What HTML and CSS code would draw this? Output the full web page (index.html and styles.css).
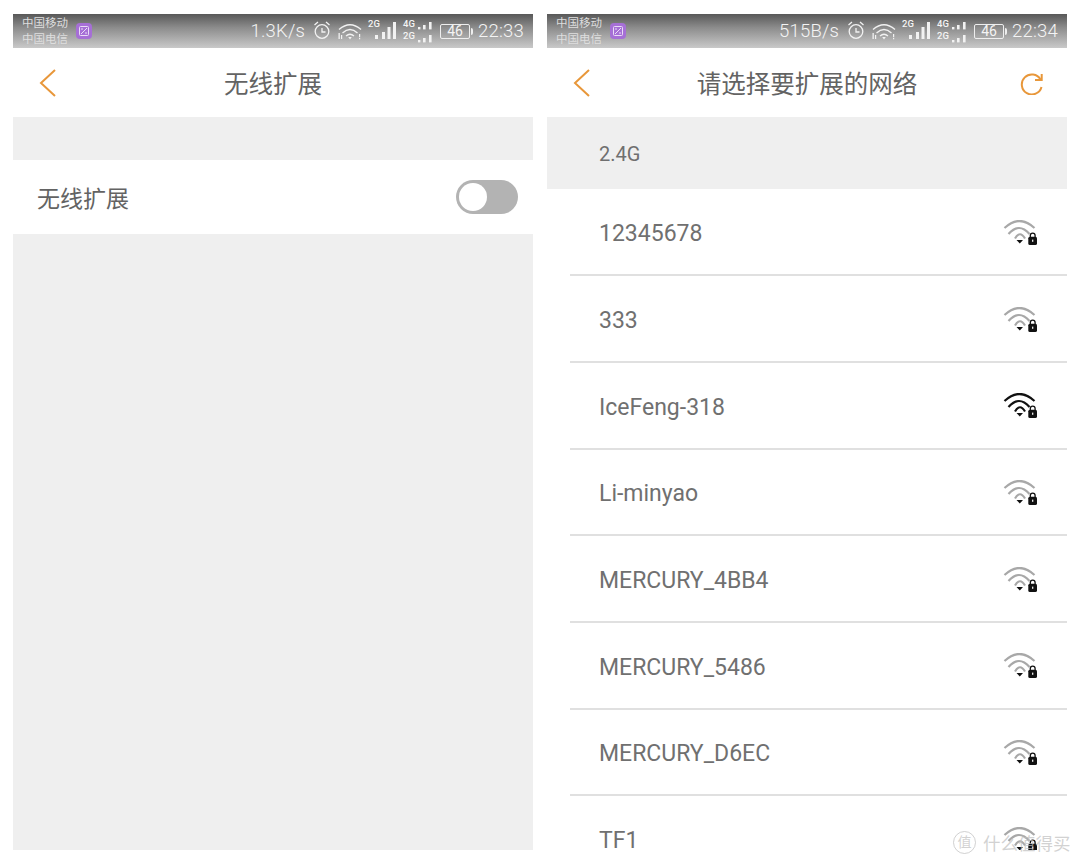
FILE: index.html
```html
<!DOCTYPE html>
<html>
  <head>
    <meta charset="utf-8">
    <link rel="stylesheet" href="styles.css">
  </head>
  <body>
    <svg class="defs">
      <defs>
        <symbol id="wifi-lock" viewBox="0 0 34 26">
          <path d="M1.5 8Q16.5-6 31.5 8M5.5 14Q16 2 26.5 14M12 18.5Q17 10 22 18.5" fill="none" stroke="currentColor" stroke-width="2.2"/>
          <path d="M13.5 20H20L16.8 23.5Z" fill="#111"/>
          <rect x="25.3" y="16.7" width="8.7" height="8.3" rx="1.6" fill="#111"/>
          <path d="M27.3 17V15.5a2.4 2.4 0 0 1 4.8 0V17" fill="none" stroke="#111" stroke-width="1.3"/>
          <rect x="29.1" y="19.6" width="1.2" height="2.2" fill="#fff"/>
        </symbol>
        <symbol id="status-icons" viewBox="0 0 120 24">
          <!-- alarm -->
          <g fill="none" stroke="#f2f2f2" stroke-width="1.3">
            <circle cx="9" cy="12.5" r="6.8"/>
            <path d="M9 9V13H12.5M1.5 6L5 3M16.5 6L13 3"/>
            <!-- wifi -->
            <path d="M26 10.5Q37 1 48 10.5M29.5 14Q37 7 44.5 14M33 17Q37 13.5 41 17"/>
          </g>
          <path d="M35.2 18H38.8L37 20.5ZM25.5 14V20H26.8V14ZM28 16V20H29.2V16ZM46 15V18.2H47.2V15ZM46 19H47.2V20.2H46Z" fill="#f2f2f2"/>
          <!-- signal 2G -->
          <g fill="#f2f2f2">
            <rect x="62" y="16" width="3" height="4"/>
            <rect x="69" y="13" width="3" height="7"/>
            <rect x="74.5" y="8" width="3" height="12"/>
            <rect x="80" y="3" width="3" height="17"/>
            <!-- signal 4G 2G -->
            <rect x="105" y="8" width="2.4" height="2.4"/>
            <rect x="110" y="6" width="2.6" height="4.4"/>
            <rect x="116" y="3" width="2.6" height="7.4"/>
            <rect x="105" y="21" width="2.4" height="2.4"/>
            <rect x="110" y="19" width="2.6" height="4.4"/>
            <rect x="116" y="16" width="2.6" height="7.4"/>
          </g>
        </symbol>
      </defs>
    </svg>

    <div class="page">
      <div class="screen">
        <div class="status">
          <div class="carrier"><span>中国移动</span><span>中国电信</span></div>
          <svg class="app-badge" viewBox="0 0 16 16"><rect width="16" height="16" rx="4" fill="#a66fd6"/><rect x="3.5" y="3.5" width="9" height="9" rx="1" fill="none" stroke="#e9dcf6"/><path d="M5 11L11 5M5 6h2M9 10h2" stroke="#e9dcf6"/></svg>
          <div class="status-right">
            <span class="speed">1.3K/s</span>
            <div class="status-icons">
              <svg class="icons-svg"><use href="#status-icons"/></svg>
              <span class="tag tag-2g">2G</span>
              <span class="tag tag-4g">4G</span>
              <span class="tag tag-2g2">2G</span>
            </div>
            <span class="battery">46</span>
            <span class="clock">22:33</span>
          </div>
        </div>
        <div class="nav">
          <svg class="back" viewBox="0 0 18 28"><path d="M16 1L2 14L16 27" fill="none" stroke="#e8973a" stroke-width="2"/></svg>
          <h1>无线扩展</h1>
        </div>
        <div class="gap"></div>
        <div class="switch-row">
          <span>无线扩展</span>
          <div class="toggle"><div class="knob"></div></div>
        </div>
      </div>

      <div class="screen">
        <div class="status">
          <div class="carrier"><span>中国移动</span><span>中国电信</span></div>
          <svg class="app-badge" viewBox="0 0 16 16"><rect width="16" height="16" rx="4" fill="#a66fd6"/><rect x="3.5" y="3.5" width="9" height="9" rx="1" fill="none" stroke="#e9dcf6"/><path d="M5 11L11 5M5 6h2M9 10h2" stroke="#e9dcf6"/></svg>
          <div class="status-right">
            <span class="speed">515B/s</span>
            <div class="status-icons">
              <svg class="icons-svg"><use href="#status-icons"/></svg>
              <span class="tag tag-2g">2G</span>
              <span class="tag tag-4g">4G</span>
              <span class="tag tag-2g2">2G</span>
            </div>
            <span class="battery">46</span>
            <span class="clock">22:34</span>
          </div>
        </div>
        <div class="nav">
          <svg class="back" viewBox="0 0 18 28"><path d="M16 1L2 14L16 27" fill="none" stroke="#e8973a" stroke-width="2"/></svg>
          <h1>请选择要扩展的网络</h1>
          <svg class="refresh" viewBox="0 0 24 24"><path d="M20.5 8.5A10 10 0 1 0 21.5 16" fill="none" stroke="#e8973a" stroke-width="2"/><path d="M21.7 3V9H15" fill="none" stroke="#e8973a" stroke-width="2"/></svg>
        </div>
        <div class="band">2.4G</div>
        <ul class="networks">
          <li>12345678<svg class="wifi"><use href="#wifi-lock"/></svg></li>
          <li>333<svg class="wifi"><use href="#wifi-lock"/></svg></li>
          <li>IceFeng-318<svg class="wifi strong"><use href="#wifi-lock"/></svg></li>
          <li>Li-minyao<svg class="wifi"><use href="#wifi-lock"/></svg></li>
          <li>MERCURY_4BB4<svg class="wifi"><use href="#wifi-lock"/></svg></li>
          <li>MERCURY_5486<svg class="wifi"><use href="#wifi-lock"/></svg></li>
          <li>MERCURY_D6EC<svg class="wifi"><use href="#wifi-lock"/></svg></li>
          <li>TF1<svg class="wifi"><use href="#wifi-lock"/></svg></li>
        </ul>
      </div>
    </div>

    <div class="watermark"><span class="mark-circle">值</span><span>什么值得买</span></div>
  </body>
</html>
```

FILE: styles.css
```css
* {
  box-sizing: border-box;
}
html, body {
  margin: 0;
  height: 864px;
  overflow: hidden;
  background: #fff;
}
body {
  position: relative;
  font-family: Roboto, "Noto Sans CJK SC", sans-serif;
  color: #666;
}
.defs {
  display: none;
}
.page {
  display: flex;
  gap: 14px;
  padding: 14px 13px;
  height: 864px;
}
.screen {
  width: 520px;
  height: 836px;
  overflow: hidden;
  background: #fff;
  display: flex;
  flex-direction: column;
}

/* status bar */
.status {
  height: 34px;
  flex: none;
  display: flex;
  align-items: center;
  padding: 0 9px;
  background: linear-gradient(#585858, #8c8c8c 40%, #c9c9c9);
  color: #eee;
}
.carrier {
  display: flex;
  flex-direction: column;
  font-size: 11.5px;
  line-height: 16px;
  color: #dedede;
}
.app-badge {
  width: 16px;
  height: 16px;
  margin-left: 8px;
  margin-top: -1px;
}
.status-right {
  margin-left: auto;
  display: flex;
  align-items: center;
}
.speed, .clock {
  font-size: 18.5px;
  font-weight: 300;
  letter-spacing: .2px;
  color: #f4f4f4;
}
.status-icons {
  position: relative;
  width: 120px;
  height: 24px;
  margin-left: 8px;
}
.icons-svg {
  width: 120px;
  height: 24px;
  display: block;
}
.tag {
  position: absolute;
  font-size: 9.5px;
  font-weight: 500;
  line-height: 9px;
  color: #f4f4f4;
}
.tag-2g {
  left: 55px;
  top: 0;
}
.tag-4g {
  left: 90px;
  top: 0;
}
.tag-2g2 {
  left: 90px;
  top: 12px;
}
.battery {
  position: relative;
  width: 30px;
  height: 15px;
  margin: 0 3px 0 7px;
  border: 1px solid #eee;
  border-radius: 2px;
  font-size: 14px;
  line-height: 13px;
  text-align: center;
  color: #f4f4f4;
}
.battery:after {
  content: '';
  position: absolute;
  right: -4px;
  top: 3px;
  width: 2px;
  height: 7px;
  background: #eee;
  border-radius: 0 2px 2px 0;
}
.clock {
  margin-left: 5px;
}

/* nav */
.nav {
  height: 69px;
  flex: none;
  position: relative;
  display: flex;
  align-items: center;
  justify-content: center;
  background: #fff;
}
.nav h1 {
  margin: 0;
  font-size: 24.5px;
  font-weight: 400;
  color: #636363;
}
.back {
  position: absolute;
  left: 26px;
  top: 21px;
  width: 18px;
  height: 28px;
}
.refresh {
  position: absolute;
  right: 23px;
  top: 23px;
  width: 24px;
  height: 24px;
}

/* left screen */
.gap {
  height: 43px;
  flex: none;
  background: #efefef;
}
.switch-row {
  height: 74px;
  flex: none;
  display: flex;
  align-items: center;
  justify-content: space-between;
  padding: 0 15px 0 24px;
  font-size: 23px;
  color: #636363;
  background: #fff;
  box-shadow: 0 600px 0 600px #efefef;
}
.toggle {
  width: 62px;
  height: 34px;
  border-radius: 17px;
  background: #b3b3b3;
  padding: 3px;
}
.knob {
  width: 28px;
  height: 28px;
  border-radius: 50%;
  background: #fff;
}

/* right screen */
.band {
  height: 72px;
  flex: none;
  display: flex;
  align-items: center;
  padding: 2px 0 0 52px;
  font-size: 20px;
  color: #6f6f6f;
  background: #efefef;
}
.networks {
  margin: 0;
  padding: .5px 0 0;
  list-style: none;
}
.networks li {
  height: 86.7px;
  margin-left: 23px;
  padding: 5px 30px 0 29px;
  display: flex;
  align-items: center;
  justify-content: space-between;
  font-size: 23px;
  line-height: 20px;
  color: #707070;
  border-bottom: 2px solid #e0e0e0;
}
.wifi {
  width: 34px;
  height: 26px;
  margin-top: -3px;
  color: #a8a8a8;
  flex: none;
}
.wifi.strong {
  color: #111;
}

/* site watermark over the picture */
.watermark {
  position: absolute;
  left: 953px;
  top: 830px;
  display: flex;
  align-items: center;
  gap: 7px;
  font-size: 17.5px;
  color: rgba(190, 190, 190, .7);
}
.mark-circle {
  width: 23px;
  height: 23px;
  border: 1px solid rgba(190, 190, 190, .7);
  border-radius: 50%;
  font-size: 14px;
  line-height: 21px;
  text-align: center;
}
```
